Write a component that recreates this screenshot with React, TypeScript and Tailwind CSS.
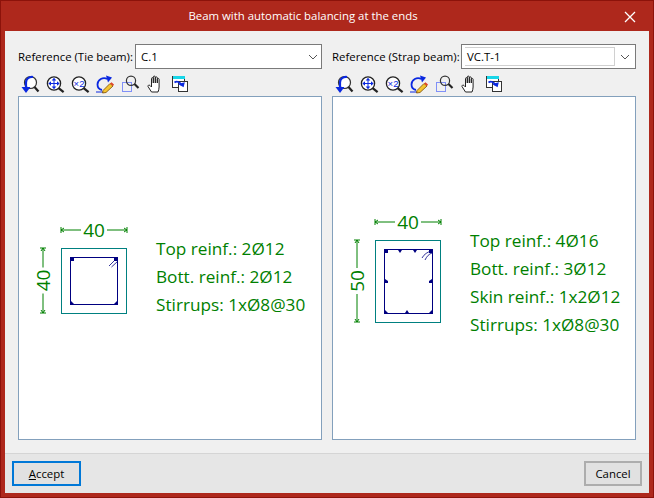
import React from 'react';

const UI_FONT = "font-['Open_Sans','Noto_Sans',sans-serif]";

// toolbar icons, all on a 20x20 box
const Lens = ({ cx = 8.5, cy = 8.5, r = 6.6 }: { cx?: number; cy?: number; r?: number }) => (
  <>
    <circle cx={cx} cy={cy} r={r} fill="#fff" stroke="#222" strokeWidth="1.3" />
    <path d={`M${cx + r - 2} ${cy + r - 2}L${cx + r + 3} ${cy + r + 2}`} stroke="#222" strokeWidth="2.2" />
  </>
);

const IconPrevious = () => (
  <svg width="20" height="20" viewBox="0 -0.5 20 20">
    <circle cx="10.5" cy="8" r="6" fill="#fff" stroke="#333" strokeWidth="1.2" />
    <path d="M14.5 12.5L18.5 17" stroke="#222" strokeWidth="2.2" />
    <path d="M6 15V8C6 4.5 9 2 13 2.5" fill="none" stroke="#0a28e0" strokeWidth="2.2" />
    <path d="M1.5 12.5H10.5L6 18.5Z" fill="#0a28e0" />
  </svg>
);

const IconFit = () => (
  <svg width="20" height="20" viewBox="-0.5 -1 20 20">
    <Lens />
    <path d="M8.5 2.8L10.8 5.5H6.2ZM8.5 14.2L10.8 11.5H6.2ZM2.8 8.5L5.5 6.2V10.8ZM14.2 8.5L11.5 6.2V10.8Z" fill="#0a28e0" />
    <path d="M8.5 5V12M5 8.5H12" stroke="#0a28e0" strokeWidth="1" />
  </svg>
);

const IconZoom2 = () => (
  <svg width="20" height="20" viewBox="-0.5 -1 20 20">
    <Lens />
    <text x="8.5" y="12" textAnchor="middle" fontSize="9.5" fill="#0a28e0" fontFamily="Liberation Sans, sans-serif">×2</text>
  </svg>
);

const IconRedraw = () => (
  <svg width="20" height="20" viewBox="0 -0.5 20 20">
    <path d="M12.5 4.5C8 2 2.5 5 2.5 10C2.5 13 4.5 15 7 15.5" fill="none" stroke="#0a28e0" strokeWidth="1.8" />
    <path d="M11 1L17 3L13 8Z" fill="#0a28e0" />
    <path d="M1 17.5H9" stroke="#0a28e0" strokeWidth="1" />
    <path d="M8 16L15 9L18 11.5L11 18L7.5 18.5Z" fill="#f4c430" stroke="#7a4a00" strokeWidth="0.8" />
    <path d="M15 9L18 11.5L19 10L16.5 7.8Z" fill="#e0452a" />
  </svg>
);

const IconWindow = () => (
  <svg width="20" height="20" viewBox="0 0 20 20">
    <path d="M2.5 8.5H11.5V17.5H2.5Z" fill="none" stroke="#1030ff" strokeWidth="1" strokeDasharray="1 1" />
    <circle cx="11" cy="6.8" r="4.6" fill="none" stroke="#333" strokeWidth="1.2" />
    <path d="M14.5 10L18.5 14" stroke="#222" strokeWidth="2.2" />
  </svg>
);

const IconHand = () => (
  <svg width="20" height="20" viewBox="0 0 20 20">
    <path
      d="M6.5 18L3 12.5C2.5 11.5 4 10.5 5 11.5L6.5 13V4.5C6.5 3.4 8.3 3.4 8.3 4.5V9V3C8.3 1.8 10.3 1.8 10.3 3V9V3.7C10.3 2.6 12.3 2.6 12.3 3.7V9V5.3C12.3 4.2 14.1 4.2 14.1 5.3V13C14.1 15 13.5 16.5 13 18Z"
      fill="#fff"
      stroke="#222"
      strokeWidth="1"
      strokeLinejoin="round"
    />
  </svg>
);

const IconPanel = () => (
  <svg width="20" height="20" viewBox="0 0 20 20">
    <rect x="2.5" y="2.5" width="12" height="11" fill="#fff" stroke="#333" />
    <rect x="3" y="2" width="12" height="3" fill="#19d6e8" />
    <rect x="8.5" y="7.5" width="9" height="10" fill="#fff" stroke="#333" />
    <path d="M4.5 8.5C7 6.8 10 8 11.5 11" fill="none" stroke="#0a28e0" strokeWidth="1.8" />
    <path d="M8.5 12H15L13.5 7Z" fill="#0a28e0" transform="rotate(30 12 10)" />
  </svg>
);

const Toolbar = () => (
  <div className="flex h-[20px] items-center gap-[5px] pl-[2px]">
    <IconPrevious />
    <IconFit />
    <IconZoom2 />
    <IconRedraw />
    <IconWindow />
    <IconHand />
    <IconPanel />
  </div>
);

const Chevron = () => (
  <svg width="10" height="6" viewBox="0 0 10 6" className="shrink-0">
    <path d="M1 1L5 5L9 1" fill="none" stroke="#555" strokeWidth="1" />
  </svg>
);

// dimension line with small filled arrows and a tick at both ends
const DimH = ({ x1, x2, y }: { x1: number; x2: number; y: number }) => {
  const mid = (x1 + x2) / 2;
  return (
    <g stroke="#008000" strokeWidth="1" fill="none">
      <path d={`M${x1} ${y}H${mid - 13}M${mid + 13} ${y}H${x2}`} />
      <path d={`M${x1 + 3} ${y - 2}L${x1} ${y}L${x1 + 3} ${y + 2}M${x1} ${y - 3}V${y + 3}`} />
      <path d={`M${x2 - 3} ${y - 2}L${x2} ${y}L${x2 - 3} ${y + 2}M${x2} ${y - 3}V${y + 3}`} />
    </g>
  );
};

const DimV = ({ x, y1, y2 }: { x: number; y1: number; y2: number }) => {
  const mid = (y1 + y2) / 2;
  return (
    <g stroke="#008000" strokeWidth="1" fill="none">
      <path d={`M${x} ${y1}V${mid - 13}M${x} ${mid + 13}V${y2}`} />
      <path d={`M${x - 2} ${y1 + 3}L${x} ${y1}L${x + 2} ${y1 + 3}M${x - 3} ${y1}H${x + 3}`} />
      <path d={`M${x - 2} ${y2 - 3}L${x} ${y2}L${x + 2} ${y2 - 3}M${x - 3} ${y2}H${x + 3}`} />
    </g>
  );
};

// corner bars are little wedges tucked into the stirrup
const Bar = ({ d }: { d: string }) => <path d={d} fill="#000080" />;

const SectionLeft = () => (
  <svg width="110" height="110" viewBox="0 0 110 110" className="mt-[4px] shrink-0" style={{ fontFamily: 'Open Sans, sans-serif' }}>
    <DimH x1={31} x2={97} y={15} />
    <text x="64" y="22" textAnchor="middle" fontSize="19" fill="#008000">40</text>
    <DimV x={13} y1={33} y2={98} />
    <text transform="translate(20 65.5) rotate(-90)" textAnchor="middle" fontSize="19" fill="#008000">40</text>
    <rect x="31.5" y="33.5" width="65" height="65" fill="none" stroke="#008080" />
    <rect x="40.5" y="42.5" width="47" height="47" fill="none" stroke="#000080" strokeWidth="1" />
    <path d="M79 51L86 44M81.5 52L88 46" stroke="#000080" strokeWidth="0.8" fill="none" />
    <Bar d="M41 43H44V46H41Z" />
    <Bar d="M84 43H87V46H84Z" />
    <Bar d="M41 86L44 89H41Z" />
    <Bar d="M87 86V89H84Z" />
  </svg>
);

const SectionRight = () => (
  <svg width="110" height="120" viewBox="-1 0 110 120" className="mt-[4px] shrink-0" style={{ fontFamily: 'Open Sans, sans-serif' }}>
    <DimH x1={30} x2={96} y={12} />
    <text x="63" y="19" textAnchor="middle" fontSize="19" fill="#008000">40</text>
    <DimV x={12} y1={30} y2={112} />
    <text transform="translate(19 71) rotate(-90)" textAnchor="middle" fontSize="19" fill="#008000">50</text>
    <rect x="30.5" y="30.5" width="65" height="82" fill="none" stroke="#008080" />
    <rect x="39.5" y="39.5" width="48" height="64" fill="none" stroke="#000080" strokeWidth="1" />
    <path d="M77 48C79 44 83 42 86 41M80 50C82 46 84 44 87 43" stroke="#000080" strokeWidth="0.8" fill="none" />
    <Bar d="M40 40H43V43H40Z" />
    <Bar d="M53 40H57L55 43Z" />
    <Bar d="M68 40H72L70 43Z" />
    <Bar d="M84 40H87V43H84Z" />
    <Bar d="M40 69L43 71V73H40Z" />
    <Bar d="M87 69V73H84V71Z" />
    <Bar d="M40 100L43 103H40Z" />
    <Bar d="M60 103L62 100L64 103Z" />
    <Bar d="M87 100V103H84Z" />
  </svg>
);

const Panel = ({ children, lines, offset }: { children: React.ReactNode; lines: string[]; offset: string }) => (
  <div className="flex h-[344px] w-[304px] items-center border border-[#83a0bc] bg-white pl-[11px]">
    {children}
    <div className={`ml-[16px] text-[17.2px] leading-[28px] whitespace-nowrap text-[#008000] ${offset}`}>
      {lines.map((line) => (
        <div key={line}>{line}</div>
      ))}
    </div>
  </div>
);

export default function App() {
  return (
    <div className={`flex h-[498px] w-[654px] flex-col border border-[#8c120a] bg-[#ae281c] ${UI_FONT}`}>
      {/* title bar, text is centred left of the close button */}
      <div className="flex h-[30px] shrink-0 items-center text-[11.4px] text-white">
        <div className="flex-1 pr-[2px] text-center">Beam with automatic balancing at the ends</div>
        <div className="flex w-[46px] justify-center pt-[2px]">
          <svg width="12" height="12" viewBox="0 0 12 12">
            <path d="M1 1L11 11M11 1L1 11" stroke="#fff" strokeWidth="1.3" />
          </svg>
        </div>
      </div>

      <div className="mx-[4px] mb-[4px] flex min-h-0 flex-1 flex-col bg-[#f0f0f0] text-[11.4px] text-black">
        <div className="flex flex-1 gap-[10px] pl-[13px] pt-[13px]">
          <div className="flex w-[304px] flex-col">
            <div className="flex h-[25px] items-center">
              <span className="min-w-0 flex-1 whitespace-nowrap">Reference (Tie beam):</span>
              <div className="flex h-[25px] w-[187px] items-center justify-between border border-[#7a7a7a] bg-white pl-[5px] pr-[3px]">
                C.1
                <Chevron />
              </div>
            </div>
            <div className="mt-[5px] mb-[2px]">
              <Toolbar />
            </div>
            <Panel lines={['Top reinf.: 2Ø12', 'Bott. reinf.: 2Ø12', 'Stirrups: 1xØ8@30']} offset="mt-[18px]">
              <SectionLeft />
            </Panel>
          </div>

          <div className="flex w-[304px] flex-col">
            <div className="flex h-[25px] items-center">
              <span className="min-w-0 flex-1 whitespace-nowrap">Reference (Strap beam):</span>
              <div className="flex h-[25px] w-[175px] items-center border border-[#7a7a7a] bg-white py-[2px] pl-[3px] pr-0">
                <div className="flex h-full flex-1 items-center border border-l-0 border-[#d0d0d0] pl-[2px]">VC.T-1</div>
                <div className="flex w-[20px] justify-center">
                  <Chevron />
                </div>
              </div>
            </div>
            <div className="mt-[5px] mb-[2px]">
              <Toolbar />
            </div>
            <Panel lines={['Top reinf.: 4Ø16', 'Bott. reinf.: 3Ø12', 'Skin reinf.: 1x2Ø12', 'Stirrups: 1xØ8@30']} offset="mt-[30px]">
              <SectionRight />
            </Panel>
          </div>
        </div>

        {/* footer */}
        <div className="flex h-[40px] shrink-0 items-center justify-between border-t border-[#d5d5d5] bg-[#e6e6e6] px-[7px]">
          <button className="h-[25px] w-[69px] border-2 border-[#0078d7] bg-[#e1e1e1]">
            <span className="underline">A</span>ccept
          </button>
          <button className="h-[25px] w-[58px] border-2 border-[#adadad] bg-[#e1e1e1]">Cancel</button>
        </div>
      </div>
    </div>
  );
}
